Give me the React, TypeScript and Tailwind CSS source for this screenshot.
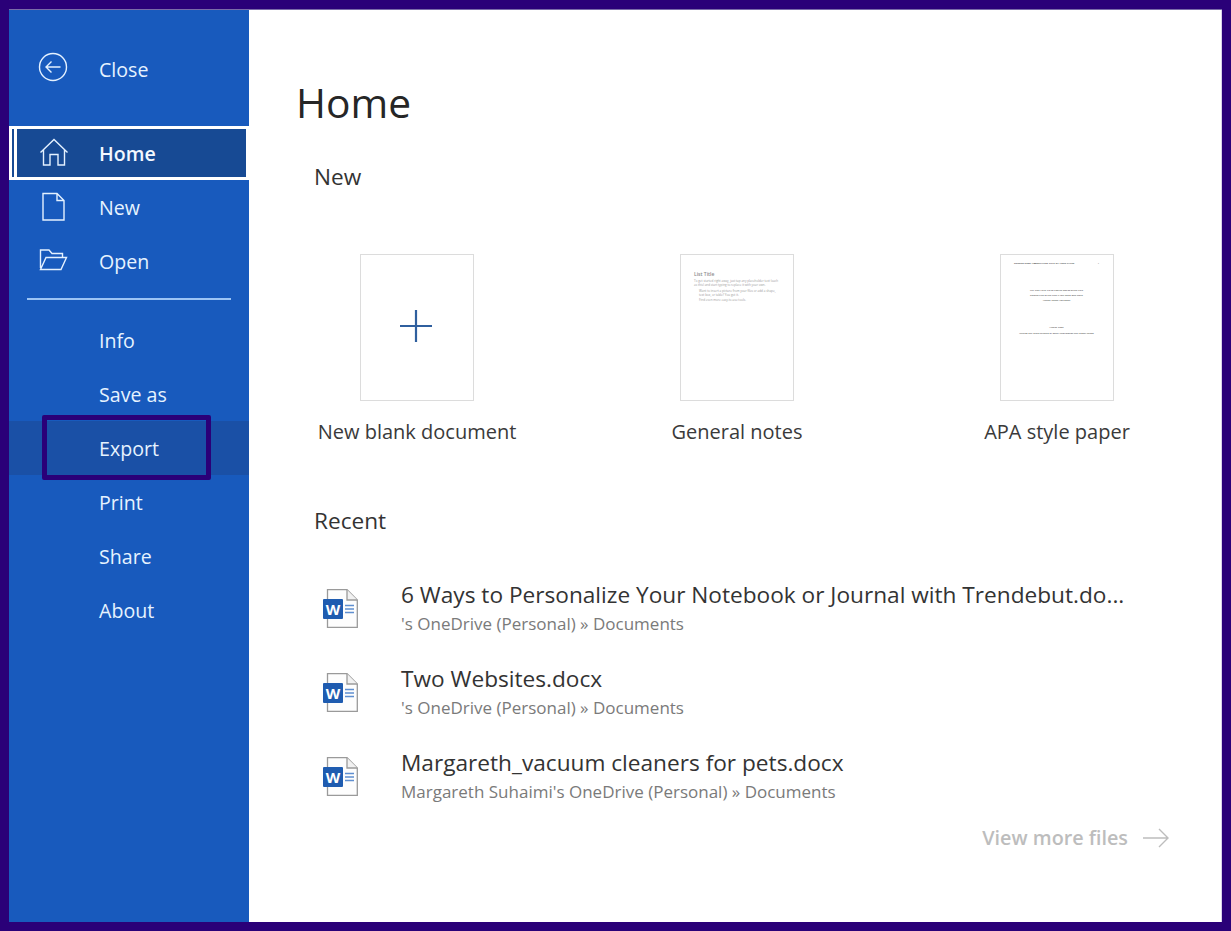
import React from "react";

const font = { fontFamily: '"Open Sans", "Noto Sans", sans-serif' };

const primary = ["Info", "Save as", "Export", "Print", "Share", "About"];

const templates = [
  { label: "New blank document", kind: "blank" },
  { label: "General notes", kind: "notes" },
  { label: "APA style paper", kind: "apa" },
];

const recents = [
  {
    name: "6 Ways to Personalize Your Notebook or Journal with Trendebut.do...",
    path: "'s OneDrive (Personal) » Documents",
  },
  { name: "Two Websites.docx", path: "'s OneDrive (Personal) » Documents" },
  {
    name: "Margareth_vacuum cleaners for pets.docx",
    path: "Margareth Suhaimi's OneDrive (Personal) » Documents",
  },
];

function NavIcon({ children }: { children: React.ReactNode }) {
  return (
    <svg width="32" height="32" viewBox="0 0 32 32" fill="none" stroke="#e4f1ff" strokeWidth="1.4" className="shrink-0">
      {children}
    </svg>
  );
}

function WordIcon() {
  return (
    <div className="relative w-[37px] h-[40px] shrink-0">
      <svg width="37" height="40" viewBox="0 0 37 40" fill="none" className="absolute inset-0">
        <path d="M5.5 0.7H25L35.3 11V38.3H5.5Z" fill="#fdfdfd" stroke="#9a9a9a" strokeWidth="1.3" />
        <path d="M25 0.7V11H35.3" fill="#f1f1f1" stroke="#9a9a9a" strokeWidth="1.3" />
        <path d="M23 16.5H32M23 20H32M23 23.5H32" stroke="#5f8fd0" strokeWidth="1.4" />
      </svg>
      <div className="absolute left-[1px] top-[10px] w-[20px] h-[20px] rounded-[1px] bg-[#1f5cb0] text-white text-[15px] leading-[20px] font-bold text-center">
        W
      </div>
    </div>
  );
}

function Thumb({ kind }: { kind: string }) {
  return (
    <div className="w-[114px] h-[147px] border border-[#dcdcdc] bg-white flex flex-col">
      {kind === "blank" && (
        <div className="flex-1 flex items-center justify-center pb-[3px] pr-[2px]">
          <svg width="32" height="32" viewBox="0 0 32 32" stroke="#2f5f9e" strokeWidth="2.2">
            <path d="M16 0V32M0 16H32" />
          </svg>
        </div>
      )}
      {kind === "notes" && (
        <div className="pt-[16px] pl-[13px] pr-[14px] text-[#9a9a9a]">
          <div className="text-[5px] leading-[7px] font-semibold text-[#8a8a8a]">List Title</div>
          <div className="text-[3px] leading-[4px] mt-[1px]">
            To get started right away, just tap any placeholder text (such as this) and start typing to replace it with your own.
          </div>
          <div className="text-[3px] leading-[4px] mt-[2px] pl-[5px]">
            Want to insert a picture from your files or add a shape, text box, or table? You got it.
          </div>
          <div className="text-[3px] leading-[4px] mt-[1px] pl-[5px]">Find even more easy-to-use tools.</div>
        </div>
      )}
      {kind === "apa" && (
        <div className="pt-[6px] pl-[13px] pr-[14px] text-[#5c5c5c] font-semibold">
          <div className="text-[2.4px] leading-[4px] flex justify-between whitespace-nowrap">
            <span className="font-bold">Running head: ABBREVIATED TITLE OF YOUR PAPER</span>
            <span>1</span>
          </div>
          <div className="mt-[23px] text-[2.4px] leading-[5px] text-center">
            <div>Full Title Here: Up to Twelve Words of the Title</div>
            <div>Second Line of the Title if You Need One More</div>
            <div>Author Name Affiliation</div>
          </div>
          <div className="mt-[21px] text-[2.4px] leading-[6px] text-center whitespace-nowrap">
            <div>Author Note</div>
            <div>Include any grant funding or other information the reader needs</div>
          </div>
        </div>
      )}
    </div>
  );
}

export default function App() {
  return (
    <div style={font} className="relative w-[1231px] h-[931px] bg-[#2a0078] pl-[9px] pr-[9px] pt-[9px] pb-[9px] overflow-hidden">
      <div className="h-[913px] flex border-t border-[#7a6ba8]">
        <aside className="w-[240px] shrink-0 bg-[#185abd] text-[#e6f3ff] text-[19.6px]">
          <div className="h-[116px] flex items-start pt-[40px] pl-[28px] gap-[30px]">
            <div className="h-[34px] flex items-center">
              <NavIcon>
                <circle cx="16" cy="16" r="13.5" />
                <path d="M23.5 16H9M14.5 10.5L9 16L14.5 21.5" />
              </NavIcon>
            </div>
            <span className="leading-[40px]">Close</span>
          </div>

          <div className="h-[54px] border-[3px] border-white bg-[#174a94] flex items-center relative">
            <div className="absolute left-[2px] top-0 bottom-0 w-[3px] bg-white" />
            <div className="pl-[26px] flex items-center gap-[29px]">
              <NavIcon>
                <path d="M2.5 15.5L16 2.5L29.5 15.5M5.5 13V28H12V17.5H20V28H26.5V13" />
              </NavIcon>
              <span className="font-semibold text-[#f2f8ff] pt-[2px]">Home</span>
            </div>
          </div>

          <div className="h-[54px] pl-[28px] flex items-center gap-[30px]">
            <NavIcon>
              <path d="M6 2.5H20L27 9.5V29H6ZM20 2.5V9.5H27" />
            </NavIcon>
            <span className="pt-[2px]">New</span>
          </div>
          <div className="h-[54px] pl-[28px] flex items-center gap-[30px]">
            <NavIcon>
              <path d="M3.5 23V5H12L15 8.5H25.5V12.5M3.5 24.5H24L29.5 12.5H9L3.5 24.5Z" />
            </NavIcon>
            <span className="pt-[2px]">Open</span>
          </div>

          <div className="ml-[18px] mr-[18px] mt-[10px] h-[2px] bg-[#9cc4f5]" />

          <div className="mt-[13px]">
            {primary.map((item) => (
              <div
                key={item}
                className={`h-[54px] pl-[90px] pt-[2px] flex items-center ${item === "Export" ? "bg-[#1a50a6]" : ""}`}
              >
                {item}
              </div>
            ))}
          </div>
        </aside>

        <main className="flex-1 bg-white border-r border-[#d9d2ea] text-[#2f2f2f]">
          <h1 className="ml-[47px] mt-[64px] text-[40.7px] leading-[56px] font-normal text-[#262626]">Home</h1>

          <div className="ml-[65px] mt-[31px] text-[22.6px] leading-[32px] font-medium text-[#333]">New</div>

          <div className="ml-[8px] mt-[61px] flex">
            {templates.map((t) => (
              <div key={t.label} className="w-[320px] flex flex-col items-center">
                <Thumb kind={t.kind} />
                <div className="mt-[16px] text-[20px] leading-[30px] text-[#3a3a3a]">{t.label}</div>
              </div>
            ))}
          </div>

          <div className="ml-[65px] mt-[58px] text-[22.6px] leading-[32px] font-medium text-[#333]">Recent</div>

          <div className="ml-[73px] mt-[41px] flex flex-col">
            {recents.map((r) => (
              <div key={r.name} className="h-[84px] flex items-start gap-[42px]">
                <div className="pt-[11px]">
                  <WordIcon />
                </div>
                <div>
                  <div className="text-[22.65px] leading-[34px] text-[#333] whitespace-nowrap">{r.name}</div>
                  <div className="text-[17px] leading-[24px] text-[#7a7a7a] whitespace-nowrap">{r.path}</div>
                </div>
              </div>
            ))}
          </div>

          <div className="mr-[51px] -mt-[7px] flex justify-end items-center gap-[14px] text-[#bdbdbd]">
            <span className="text-[19.8px] leading-[30px] font-semibold">View more files</span>
            <svg width="28" height="22" viewBox="0 0 28 22" fill="none" stroke="#bdbdbd" strokeWidth="1.4">
              <path d="M1 11H26M17 2L26 11L17 20" />
            </svg>
          </div>
        </main>
      </div>

      <div className="absolute left-[42px] top-[415px] w-[169px] h-[65px] border-[5px] border-[#2a0078] rounded-[2px]" />
    </div>
  );
}
